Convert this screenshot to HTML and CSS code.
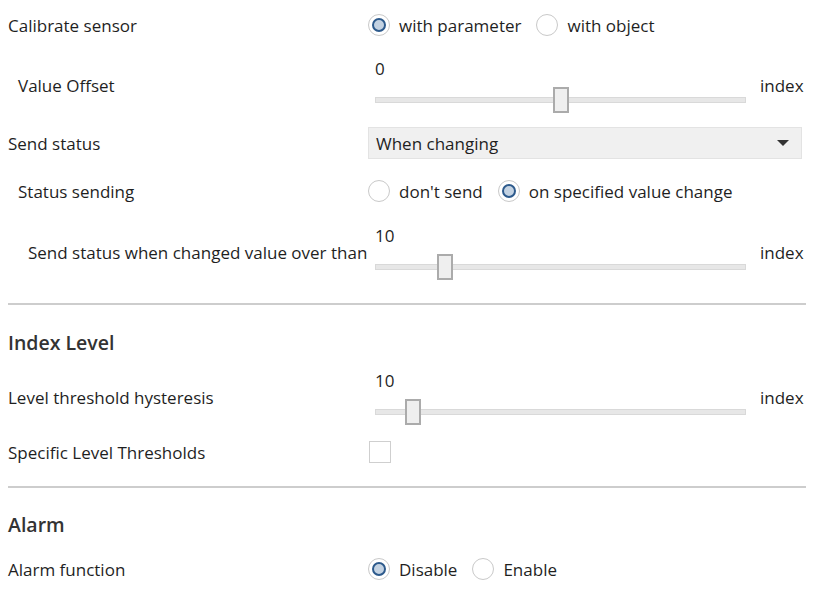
FILE: index.html
```html
<!DOCTYPE html>
<html>
<head>
<meta charset="utf-8">
<link rel="stylesheet" href="styles.css">
</head>
<body>
<div class="page">
  <div class="row first">
    <div class="label">Calibrate sensor</div>
    <div class="radios">
      <span class="radio checked"></span><span class="rtext">with parameter</span>
      <span class="radio"></span><span class="rtext">with object</span>
    </div>
  </div>

  <div class="row slider-row">
    <div class="label ind1">Value Offset</div>
    <div class="slider">
      <div class="track-area">
        <div class="value">0</div>
        <div class="track"><span class="thumb" style="left:177px"></span></div>
      </div>
      <div class="unit">index</div>
    </div>
  </div>

  <div class="row dd-row">
    <div class="label">Send status</div>
    <div class="dropdown">
      <span>When changing</span>
      <span class="arrow"></span>
    </div>
  </div>

  <div class="row">
    <div class="label ind1">Status sending</div>
    <div class="radios">
      <span class="radio"></span><span class="rtext">don't send</span>
      <span class="radio checked"></span><span class="rtext">on specified value change</span>
    </div>
  </div>

  <div class="row slider-row r5">
    <div class="label ind2">Send status when changed value over than</div>
    <div class="slider">
      <div class="track-area">
        <div class="value">10</div>
        <div class="track"><span class="thumb" style="left:61px"></span></div>
      </div>
      <div class="unit">index</div>
    </div>
  </div>

  <div class="divider d1"></div>

  <div class="heading h1">Index Level</div>

  <div class="row slider-row r7">
    <div class="label">Level threshold hysteresis</div>
    <div class="slider">
      <div class="track-area">
        <div class="value">10</div>
        <div class="track"><span class="thumb" style="left:29px"></span></div>
      </div>
      <div class="unit">index</div>
    </div>
  </div>

  <div class="row r8">
    <div class="label">Specific Level Thresholds</div>
    <div><span class="checkbox"></span></div>
  </div>

  <div class="divider d2"></div>

  <div class="heading h2">Alarm</div>

  <div class="row last">
    <div class="label">Alarm function</div>
    <div class="radios">
      <span class="radio checked"></span><span class="rtext">Disable</span>
      <span class="radio"></span><span class="rtext">Enable</span>
    </div>
  </div>
</div>
</body>
</html>
```

FILE: styles.css
```css
html, body {
  margin: 0;
  padding: 0;
  background: #ffffff;
}
body {
  font-family: "Open Sans", "Noto Sans", sans-serif;
  font-size: 17px;
  color: #1f1f1f;
}
.page {
  padding: 7px 12px 0 8px;
  display: flex;
  flex-direction: column;
}
.row {
  display: grid;
  grid-template-columns: 360px 434px;
  align-items: center;
  min-height: 36px;
  margin-top: 14px;
}
.row.first { margin-top: 0; }
.label { white-space: nowrap; }
.ind1 { padding-left: 10px; }
.ind2 { padding-left: 20px; }

.radios {
  display: flex;
  align-items: center;
}
.radio {
  width: 22px;
  height: 22px;
  box-sizing: border-box;
  border: 1px solid #c9c9c9;
  border-radius: 50%;
  background: #fff;
  display: inline-flex;
  align-items: center;
  justify-content: center;
  flex: none;
}
.radio.checked::after {
  content: "";
  width: 14px;
  height: 14px;
  box-sizing: border-box;
  border-radius: 50%;
  border: 2px solid #2d5a8c;
  background: #c3d2e2;
}
.rtext {
  margin-left: 9px;
  margin-right: 15px;
}

.slider-row { height: 56px; }
.slider {
  display: flex;
  align-items: center;
  height: 56px;
}
.track-area {
  position: relative;
  flex: none;
  width: 371px;
  height: 56px;
  margin-left: 7px;
}
.value {
  line-height: 24px;
  height: 24px;
}
.track {
  position: relative;
  margin-top: 16px;
  height: 6px;
  box-sizing: border-box;
  background: #e7e7e7;
  border: 1px solid #d9d9d9;
}
.thumb {
  position: absolute;
  top: -11px;
  width: 16px;
  height: 26px;
  box-sizing: border-box;
  background: #efefef;
  border: 2px solid #ababab;
}
.unit {
  flex: none;
  margin-left: 14px;
  white-space: nowrap;
}

.dd-row { min-height: 32px; }
.dropdown {
  height: 32px;
  box-sizing: border-box;
  background: #f0f0f0;
  border: 1px solid #e3e3e3;
  display: flex;
  align-items: center;
  justify-content: space-between;
  padding: 0 12px 0 7px;
}
.arrow {
  width: 0;
  height: 0;
  border-left: 6px solid transparent;
  border-right: 6px solid transparent;
  border-top: 6px solid #333;
}

.r5 { margin-top: 15px; }
.divider {
  height: 2px;
  background: #cdcdcd;
  width: 798px;
}
.d1 { margin-top: 23px; }
.d2 { margin-top: 16px; }
.heading {
  font-size: 19.5px;
  font-weight: 600;
  color: #333;
  height: 26px;
  line-height: 26px;
}
.h1 { margin-top: 25px; }
.h2 { margin-top: 24px; }
.r7 { margin-top: 13px; }
.r8 { margin-top: 9px; }
.row.last { margin-top: 13px; }
.checkbox {
  display: block;
  width: 22px;
  height: 22px;
  box-sizing: border-box;
  border: 1px solid #cfcfcf;
  background: #fff;
  margin-left: 1px;
}
```
